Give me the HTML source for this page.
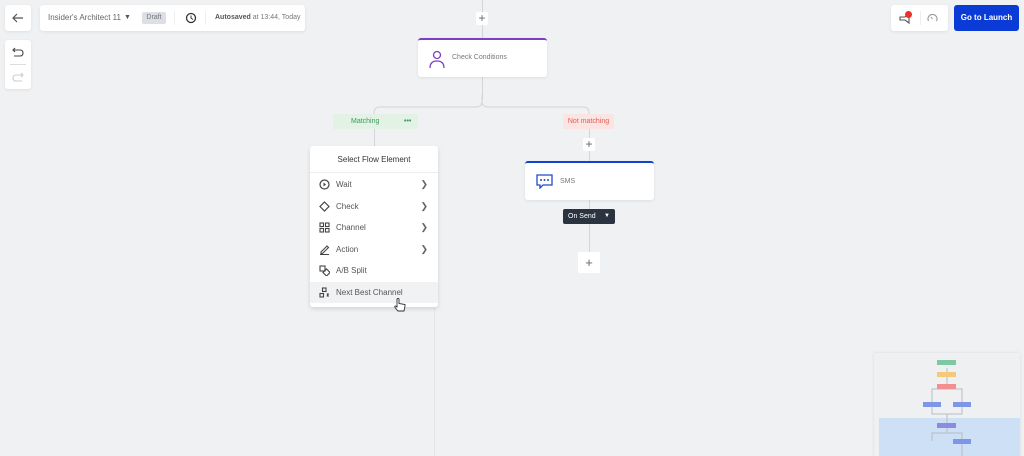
<!DOCTYPE html>
<html><head><style>
*{box-sizing:border-box;margin:0;padding:0}
body{width:1024px;height:456px;background:#eff1f3;font-family:"Liberation Sans",sans-serif;position:relative;overflow:hidden;color:#555}
.a{position:absolute}
.box{position:absolute;background:#fff;border-radius:3px;box-shadow:0 1px 3px rgba(0,0,0,.08)}
.ln{position:absolute;background:#d2d5da}
.plus{position:absolute;background:#fff;border-radius:2px;color:#666;font-size:12px;text-align:center;line-height:13px}
.item{position:absolute;left:0;width:128px;height:21px;font-size:8px;color:#555;line-height:21px;padding-left:26px}
.item svg{position:absolute;left:9px;top:5px}
.chev{position:absolute;right:10px;top:0;font-size:9px;color:#666}
</style></head><body>
<div class="ln" style="left:434px;top:300px;width:1px;height:156px;background:#e3e5e8"></div>
<div class="ln" style="left:482px;top:0;width:1px;height:100px"></div>
<svg class="a" style="left:370px;top:95px" width="225" height="25"><path d="M112 0 V6 Q112 12 106 12 H10 Q4 12 4 18 V25 M112 6 Q112 12 118 12 H213 Q219 12 219 18 V25" fill="none" stroke="#d2d5da" stroke-width="1"/></svg>
<div class="ln" style="left:374px;top:129px;width:1px;height:18px"></div>
<div class="ln" style="left:589px;top:129px;width:1px;height:32px"></div>
<div class="ln" style="left:589px;top:200px;width:1px;height:52px"></div>
<div class="plus" style="left:476px;top:12px;width:12px;height:13px">+</div>
<div class="box" style="left:5px;top:5px;width:26px;height:26px"><svg class="a" style="left:7px;top:8px" width="12" height="10"><path d="M11 5H1M5 1L1 5L5 9" fill="none" stroke="#555" stroke-width="1.2"/></svg></div>
<div class="box" style="left:40px;top:5px;width:265px;height:26px;font-size:8px;line-height:26px">
<span class="a" style="left:8px;color:#666">Insider's Architect 11</span>
<span class="a" style="left:84px;font-size:7px">▼</span>
<span class="a" style="left:102px;top:7px;width:24px;height:12px;background:#dcdfe5;border-radius:2px;line-height:12px;text-align:center;font-size:7px;color:#777">Draft</span>
<span class="a" style="left:134px;top:6px;width:1px;height:14px;background:#eee"></span>
<svg class="a" style="left:145px;top:7px" width="12" height="12"><circle cx="6" cy="6" r="4.5" fill="none" stroke="#333" stroke-width="1.3"/><path d="M6 3.5V6L8 7.5" fill="none" stroke="#333"/></svg>
<span class="a" style="left:165px;top:6px;width:1px;height:14px;background:#eee"></span>
<span class="a" style="left:175px;font-size:7px;color:#777"><b style="color:#555">Autosaved</b> at 13:44, Today</span>
</div>
<div class="box" style="left:5px;top:40px;width:26px;height:49px">
<svg class="a" style="left:7px;top:7px" width="12" height="10"><path d="M3 1L1 3L3 5M1 3H8Q11 3 11 6Q11 9 8 9H2" fill="none" stroke="#444" stroke-width="1.1"/></svg>
<div class="a" style="left:5px;top:24px;width:16px;height:1px;background:#ddd"></div>
<svg class="a" style="left:7px;top:32px" width="12" height="10"><path d="M9 1L11 3L9 5M11 3H4Q1 3 1 6Q1 9 4 9H10" fill="none" stroke="#ccc" stroke-width="1.1"/></svg>
</div>
<div class="box" style="left:418px;top:38px;width:129px;height:39px;border-top:2px solid #7b3fc4">
<svg class="a" style="left:11px;top:10px" width="16" height="19"><circle cx="8" cy="5" r="3.5" fill="none" stroke="#7b3fc4" stroke-width="1.3"/><path d="M1 18Q1 11 8 11Q15 11 15 18" fill="none" stroke="#7b3fc4" stroke-width="1.3"/></svg>
<span class="a" style="left:34px;top:14px;font-size:7px;color:#777">Check Conditions</span></div>
<div class="a" style="left:333px;top:114px;width:85px;height:15px;background:#e2f2e5;font-size:7px;color:#3c9a5a;line-height:15px"><span class="a" style="left:18px">Matching</span><span class="a" style="left:71px;font-weight:bold">•••</span></div>
<div class="a" style="left:563px;top:114px;width:51px;height:15px;background:#fbe5e3;font-size:7px;color:#e25b50;line-height:15px;text-align:center">Not matching</div>
<div class="plus" style="left:583px;top:138px;width:12px;height:13px">+</div>
<div class="box" style="left:310px;top:146px;width:128px;height:161px;box-shadow:0 2px 5px rgba(0,0,0,.12)">
<div class="a" style="left:0;top:9px;width:128px;text-align:center;font-size:8px;color:#333">Select Flow Element</div>
<div class="a" style="left:0;top:26px;width:128px;height:1px;background:#eee"></div>
<div class="item" style="top:28px"><svg width="11" height="11"><circle cx="5.5" cy="5.5" r="4.5" fill="none" stroke="#444" stroke-width="1.2"/><path d="M4.5 3.5L7 5.5L4.5 7.5" fill="#444"/></svg>Wait<span class="chev">❯</span></div>
<div class="item" style="top:50px"><svg width="11" height="11"><path d="M5.5 1L10 5.5L5.5 10L1 5.5Z" fill="none" stroke="#444" stroke-width="1.2"/></svg>Check<span class="chev">❯</span></div>
<div class="item" style="top:71px"><svg width="11" height="11" fill="none" stroke="#444" stroke-width="1.1"><rect x="1" y="1" width="3.5" height="3.5"/><rect x="6.5" y="1" width="3.5" height="3.5"/><rect x="1" y="6.5" width="3.5" height="3.5"/><rect x="6.5" y="6.5" width="3.5" height="3.5"/></svg>Channel<span class="chev">❯</span></div>
<div class="item" style="top:93px"><svg width="11" height="11" fill="none" stroke="#444" stroke-width="1.1"><path d="M2 8L8 2L9.5 3.5L3.5 9.5H2Z M1 10.5H10"/></svg>Action<span class="chev">❯</span></div>
<div class="item" style="top:114px"><svg width="11" height="11" fill="none" stroke="#444" stroke-width="1.1"><rect x="1" y="1" width="5" height="5"/><rect x="5" y="5" width="5" height="5" transform="rotate(45 7.5 7.5)"/></svg>A/B Split</div>
<div class="item" style="top:136px;background:#f1f2f4"><svg width="11" height="11" fill="none" stroke="#444" stroke-width="1.1"><rect x="3.5" y="1" width="3.5" height="3.5"/><rect x="1" y="6.5" width="3.5" height="3.5"/><path d="M8 6.5L9.5 9.5M9.5 6.5L8 9.5"/></svg>Next Best Channel</div>
</div>
<svg class="a" style="left:394px;top:298px" width="12" height="15"><path d="M3 1V9L1.5 8Q0.5 8 1 9.5L4 13H10L11 8V6.5L5 5.5V1Q4 0 3 1Z" fill="#fff" stroke="#333" stroke-width="0.9"/></svg>
<div class="box" style="left:525px;top:161px;width:129px;height:39px;border-top:2px solid #1042d6">
<svg class="a" style="left:11px;top:11px" width="17" height="15"><path d="M1 1H16V11H7L4 14V11H1Z" fill="none" stroke="#1f4bc8" stroke-width="1.3"/><circle cx="5" cy="6" r="1" fill="#1f4bc8"/><circle cx="8.5" cy="6" r="1" fill="#1f4bc8"/><circle cx="12" cy="6" r="1" fill="#1f4bc8"/></svg>
<span class="a" style="left:35px;top:15px;font-size:7px;color:#777">SMS</span></div>
<div class="a" style="left:563px;top:209px;width:52px;height:15px;background:#2b3340;border-radius:2px;color:#fff;font-size:7px;line-height:15px"><span class="a" style="left:5px">On Send</span><span class="a" style="left:41px;font-size:6px">▼</span></div>
<div class="plus" style="left:578px;top:252px;width:22px;height:21px;line-height:21px;font-size:13px">+</div>
<div class="box" style="left:891px;top:5px;width:57px;height:26px">
<svg class="a" style="left:8px;top:8px" width="14" height="12"><path d="M1 4H6L10 1V10L6 7H1Z" fill="none" stroke="#555" stroke-width="1.1"/></svg>
<div class="a" style="left:14px;top:6px;width:7px;height:7px;border-radius:50%;background:#e8322b"></div>
<div class="a" style="left:29px;top:6px;width:1px;height:14px;background:#eee"></div>
<svg class="a" style="left:36px;top:8px" width="11" height="10"><path d="M1.5 8A4.5 4.5 0 1 1 9.5 8" fill="none" stroke="#999" stroke-width="1.1"/><path d="M5.5 6L4 4" stroke="#999"/></svg>
</div>
<div class="a" style="left:954px;top:5px;width:65px;height:26px;background:#0a3bd6;border-radius:3px;color:#fff;font-size:8px;font-weight:bold;line-height:26px;text-align:center">Go to Launch</div>
<div class="a" style="left:874px;top:353px;width:146px;height:103px;background:#eef0f2;box-shadow:0 0 3px rgba(0,0,0,.1)">
<div class="a" style="left:5px;top:65px;width:141px;height:38px;background:#cde0f5"></div>
<svg class="a" style="left:0;top:0" width="146" height="103"><g stroke="#b8bcc2" fill="none"><path d="M73 15V36M73 36H58V61H88V36H73M73 61V80M73 80H58V88M73 80H88V103"/></g>
<rect x="63" y="7" width="19" height="5" fill="#7fc9a2"/><rect x="63" y="19" width="19" height="5" fill="#f4c97a"/><rect x="63" y="31" width="19" height="5" fill="#f28f8f"/><rect x="49" y="49" width="18" height="5" fill="#7f95e8"/><rect x="79" y="49" width="18" height="5" fill="#7f95e8"/><rect x="63" y="70" width="19" height="5" fill="#8d8be0"/><rect x="79" y="86" width="18" height="5" fill="#7f95e8"/></svg>
</div>
</body></html>
